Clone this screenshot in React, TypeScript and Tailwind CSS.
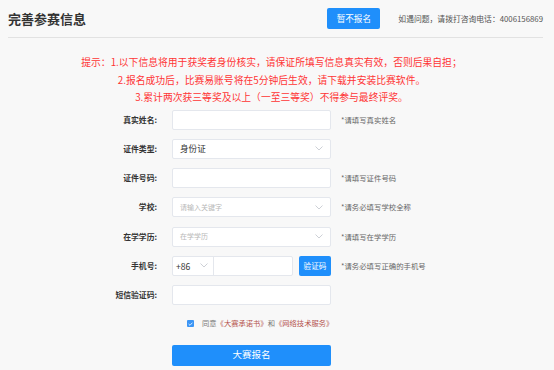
import React from "react";

const Chevron = ({ className = "" }: { className?: string }) => (
  <svg className={className} width="8" height="5" viewBox="0 0 8 5" fill="none">
    <path d="M0.5 0.5 L4 4 L7.5 0.5" stroke="#c0c4cc" strokeWidth="0.8" />
  </svg>
);

const Label = ({ children }: { children: React.ReactNode }) => (
  <div className="w-[157px] shrink-0 text-right text-[7.8px] font-bold text-[#333] leading-[20px]">{children}</div>
);

const Hint = ({ children }: { children: React.ReactNode }) => (
  <div className="ml-[10px] text-[7.4px] text-[#666] leading-[20px] whitespace-nowrap">{children}</div>
);

const box = "h-[20px] bg-white border border-[#e4e7ed] rounded-[2px]";

export default function App() {
  return (
    <div
      className="w-[554px] h-[370px] bg-[#f8f8f8] overflow-hidden"
      style={{ fontFamily: '"Microsoft YaHei", "Noto Sans CJK SC", "Noto Sans", sans-serif' }}
    >
      <div className="mx-[8px] w-[535px] h-[38px] border-b border-[#e2e2e2] flex items-center">
        <div className="text-[13px] font-bold text-[#333] leading-none">完善参赛信息</div>
        <div className="ml-auto flex items-center">
          <button className="w-[53px] h-[21px] bg-[#1f8ffb] rounded-[2px] text-white text-[8.6px] leading-none">暂不报名</button>
          <div className="ml-[18px] text-[7.8px] text-[#555] whitespace-nowrap">如遇问题，请拨打咨询电话：4006156869</div>
        </div>
      </div>

      <div className="mt-[16px] w-[543px] text-center text-[9.8px] leading-[17.5px] text-[#ff3535]">
        <div>提示：1.以下信息将用于获奖者身份核实，请保证所填写信息真实有效，否则后果自担；</div>
        <div>2.报名成功后，比赛易账号将在5分钟后生效，请下载并安装比赛软件。</div>
        <div>3.累计两次获三等奖及以上（一至三等奖）不得参与最终评奖。</div>
      </div>

      <div className="mt-[3px] flex flex-col gap-[9.3px]">
        <div className="flex h-[20px] items-center">
          <Label>真实姓名:</Label>
          <div className={`${box} ml-[15px] w-[159px]`} />
          <Hint>*请填写真实姓名</Hint>
        </div>
        <div className="flex h-[20px] items-center">
          <Label>证件类型:</Label>
          <div className={`${box} ml-[15px] w-[159px] flex items-center px-[7px]`}>
            <span className="text-[8.6px] text-[#333]">身份证</span>
            <Chevron className="ml-auto" />
          </div>
        </div>
        <div className="flex h-[20px] items-center">
          <Label>证件号码:</Label>
          <div className={`${box} ml-[15px] w-[159px]`} />
          <Hint>*请填写证件号码</Hint>
        </div>
        <div className="flex h-[20px] items-center">
          <Label>学校:</Label>
          <div className={`${box} ml-[15px] w-[159px] flex items-center px-[7px]`}>
            <span className="text-[7px] text-[#b8b8b8]">请输入关键字</span>
            <Chevron className="ml-auto" />
          </div>
          <Hint>*请务必填写学校全称</Hint>
        </div>
        <div className="flex h-[20px] items-center">
          <Label>在学学历:</Label>
          <div className={`${box} ml-[15px] w-[159px] flex items-center px-[7px]`}>
            <span className="text-[7px] text-[#b8b8b8]">在学学历</span>
            <Chevron className="ml-auto" />
          </div>
          <Hint>*请填写在学学历</Hint>
        </div>
        <div className="flex h-[20px] items-center">
          <Label>手机号:</Label>
          <div className="ml-[15px] w-[121px] h-[20px] flex bg-white border border-[#e4e7ed] rounded-[2px]">
            <div className="w-[41px] h-full flex items-center pl-[3px] pr-[5px] border-r border-[#e4e7ed]">
              <span className="text-[8.6px] text-[#333]">+86</span>
              <Chevron className="ml-auto" />
            </div>
          </div>
          <button className="ml-[6px] w-[32px] h-[20px] bg-[#1f8ffb] rounded-[2px] text-white text-[7.6px] leading-none">验证码</button>
          <Hint>*请务必填写正确的手机号</Hint>
        </div>
        <div className="flex h-[20px] items-center">
          <Label>短信验证码:</Label>
          <div className={`${box} ml-[15px] w-[159px]`} />
        </div>
      </div>

      <div className="mt-[14px] ml-[187px] flex items-center h-[9px]">
        <div className="w-[7px] h-[7px] bg-[#3b95f5] rounded-[1px] flex items-center justify-center">
          <svg width="5" height="4" viewBox="0 0 5 4" fill="none">
            <path d="M0.6 2 L2 3.3 L4.4 0.7" stroke="white" strokeWidth="0.8" />
          </svg>
        </div>
        <div className="ml-[8px] text-[7.3px] whitespace-nowrap">
          <span className="text-[#777]">同意</span>
          <span className="text-[#b5524c]">《大赛承诺书》</span>
          <span className="text-[#777]">和</span>
          <span className="text-[#b5524c]">《网络技术服务》</span>
        </div>
      </div>

      <div className="mt-[11px] ml-[172px]">
        <button className="w-[159px] h-[21px] bg-[#1f8ffb] rounded-[2px] text-white text-[9.5px] leading-none">大赛报名</button>
      </div>
    </div>
  );
}
